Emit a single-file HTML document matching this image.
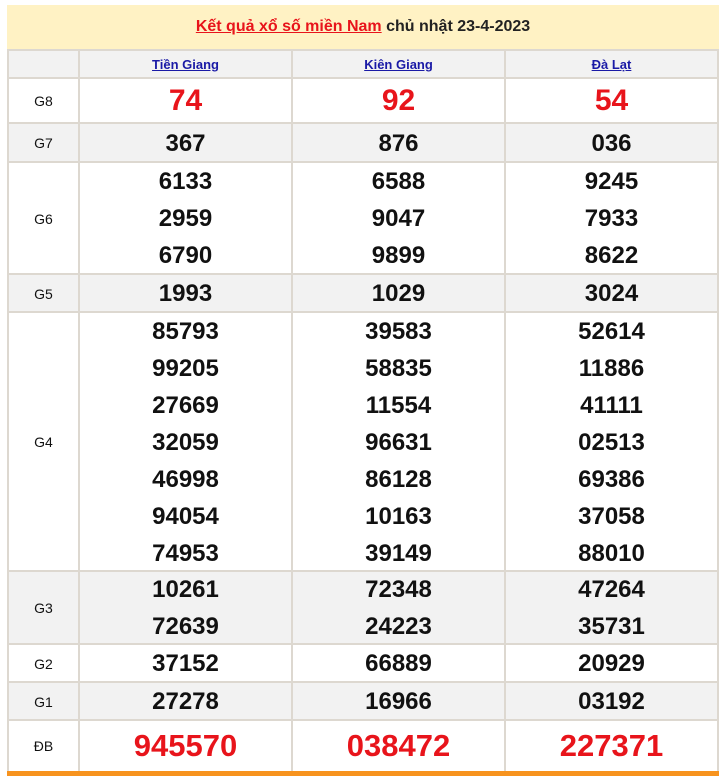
<!DOCTYPE html>
<html><head><meta charset="utf-8"><style>
body{margin:0;width:720px;height:776px;background:#fff;position:relative;overflow:hidden;font-family:"Liberation Sans",Arial,sans-serif}
.top{position:absolute;left:7px;top:5px;width:712px;height:44px;background:#fff2c4;text-align:center;line-height:44px;font-size:16px;font-weight:bold;color:#222}
.top a{color:#e8141b;text-decoration:underline}
.r{position:absolute;left:7px;width:712px;border-top:2px solid #ddd8d0;border-left:2px solid #ddd8d0;box-sizing:border-box}
.g{background:#f2f2f2}
.c{position:absolute;top:0;bottom:0;text-align:center;display:flex;flex-direction:column;justify-content:center;border-left:2px solid #ddd8d0;box-sizing:border-box}
.l{left:-2px;width:73px;font-size:14px;color:#111;border-left:none}
.c1{left:69px;width:213px}.c2{left:282px;width:213px}.c3{left:495px;border-right:2px solid #ddd8d0;width:215px}
.n{font-size:24px;font-weight:bold;color:#111;line-height:37px}
.h a{color:#1a1aa6;font-size:13px;font-weight:bold;text-decoration:underline}
.red{color:#e8141b;font-weight:bold}
</style></head><body>
<div class="top"><a>Kết quả xổ số miền Nam</a> chủ nhật 23-4-2023</div>

<div class="r g h" style="top:49px;height:28px"><div class="c l"></div><div class="c c1"><a>Tiền Giang</a></div><div class="c c2"><a>Kiên Giang</a></div><div class="c c3"><a>Đà Lạt</a></div></div>

<div class="r" style="top:77px;height:46px"><div class="c l">G8</div><div class="c c1 red" style="font-size:30px">74</div><div class="c c2 red" style="font-size:30px">92</div><div class="c c3 red" style="font-size:30px">54</div></div>

<div class="r g" style="top:122px;height:40px"><div class="c l">G7</div><div class="c c1 n">367</div><div class="c c2 n">876</div><div class="c c3 n">036</div></div>

<div class="r" style="top:161px;height:113px"><div class="c l">G6</div><div class="c c1 n">6133<br>2959<br>6790</div><div class="c c2 n">6588<br>9047<br>9899</div><div class="c c3 n">9245<br>7933<br>8622</div></div>

<div class="r g" style="top:273px;height:39px"><div class="c l">G5</div><div class="c c1 n">1993</div><div class="c c2 n">1029</div><div class="c c3 n">3024</div></div>

<div class="r" style="top:311px;height:260px"><div class="c l">G4</div><div class="c c1 n">85793<br>99205<br>27669<br>32059<br>46998<br>94054<br>74953</div><div class="c c2 n">39583<br>58835<br>11554<br>96631<br>86128<br>10163<br>39149</div><div class="c c3 n">52614<br>11886<br>41111<br>02513<br>69386<br>37058<br>88010</div></div>

<div class="r g" style="top:570px;height:74px"><div class="c l">G3</div><div class="c c1 n">10261<br>72639</div><div class="c c2 n">72348<br>24223</div><div class="c c3 n">47264<br>35731</div></div>

<div class="r" style="top:643px;height:39px"><div class="c l">G2</div><div class="c c1 n">37152</div><div class="c c2 n">66889</div><div class="c c3 n">20929</div></div>

<div class="r g" style="top:681px;height:39px"><div class="c l">G1</div><div class="c c1 n">27278</div><div class="c c2 n">16966</div><div class="c c3 n">03192</div></div>

<div class="r" style="top:719px;height:52px"><div class="c l">ĐB</div><div class="c c1 red" style="font-size:31px">945570</div><div class="c c2 red" style="font-size:31px">038472</div><div class="c c3 red" style="font-size:31px">227371</div></div>

<div style="position:absolute;left:7px;top:771px;width:712px;height:5px;background:#f7931e"></div>
</body></html>
